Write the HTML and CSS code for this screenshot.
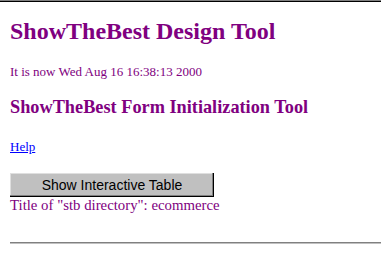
FILE: index.html
```html
<!DOCTYPE html>
<html lang="en">
<head>
  <meta charset="UTF-8">
  <title>ShowTheBest Design Tool</title>
  <link rel="stylesheet" href="styles.css">
</head>
<body>
  <div class="page">
    <h1>ShowTheBest Design Tool</h1>
    <p class="now">It is now Wed Aug 16 16:38:13 2000</p>
    <h2>ShowTheBest Form Initialization Tool</h2>
    <p class="help"><a href="#">Help</a></p>
    <form class="tool">
      <button type="button">Show Interactive Table</button>
    </form>
    <p class="title">Title of "stb directory": ecommerce</p>
    <hr>
  </div>
</body>
</html>
```

FILE: styles.css
```css
body {
  margin: 0;
  background: #ffffff;
  font-family: "Liberation Serif", "Times New Roman", serif;
  color: #800080;
}

.page {
  border-top: 1px solid #808080;
  box-shadow: inset 0 1px 0 #000;
  padding: 0 0 0 10px;
  min-height: 256px;
}

h1 {
  font-size: 24px;
  margin: 0;
  padding-top: 17px;
  line-height: 27px;
}

.now {
  font-size: 13px;
  margin: 19px 0 0;
  line-height: 15px;
}

h2 {
  font-size: 18.3px;
  margin: 18px 0 0;
  line-height: 21px;
}

.help {
  font-size: 13px;
  margin: 21px 0 0;
  line-height: 15px;
}

.help a {
  color: #0000ff;
}

.tool {
  margin: 19px 0 0;
}

button {
  width: 204px;
  height: 24px;
  background: #c0c0c0;
  border: none;
  box-shadow: inset -1px -1px 0 #000, inset -2px -2px 0 #808080, inset 1px 1px 0 #dfdfdf;
  font-family: "Liberation Sans", Arial, sans-serif;
  font-size: 14px;
  color: #000;
  padding: 0;
}

.title {
  font-size: 14.8px;
  margin: 0;
  line-height: 17px;
}

hr {
  margin: 28px 0 0;
  border: none;
  border-top: 1px solid #808080;
  border-bottom: 1px solid #c0c0c0;
  height: 0;
}
```
